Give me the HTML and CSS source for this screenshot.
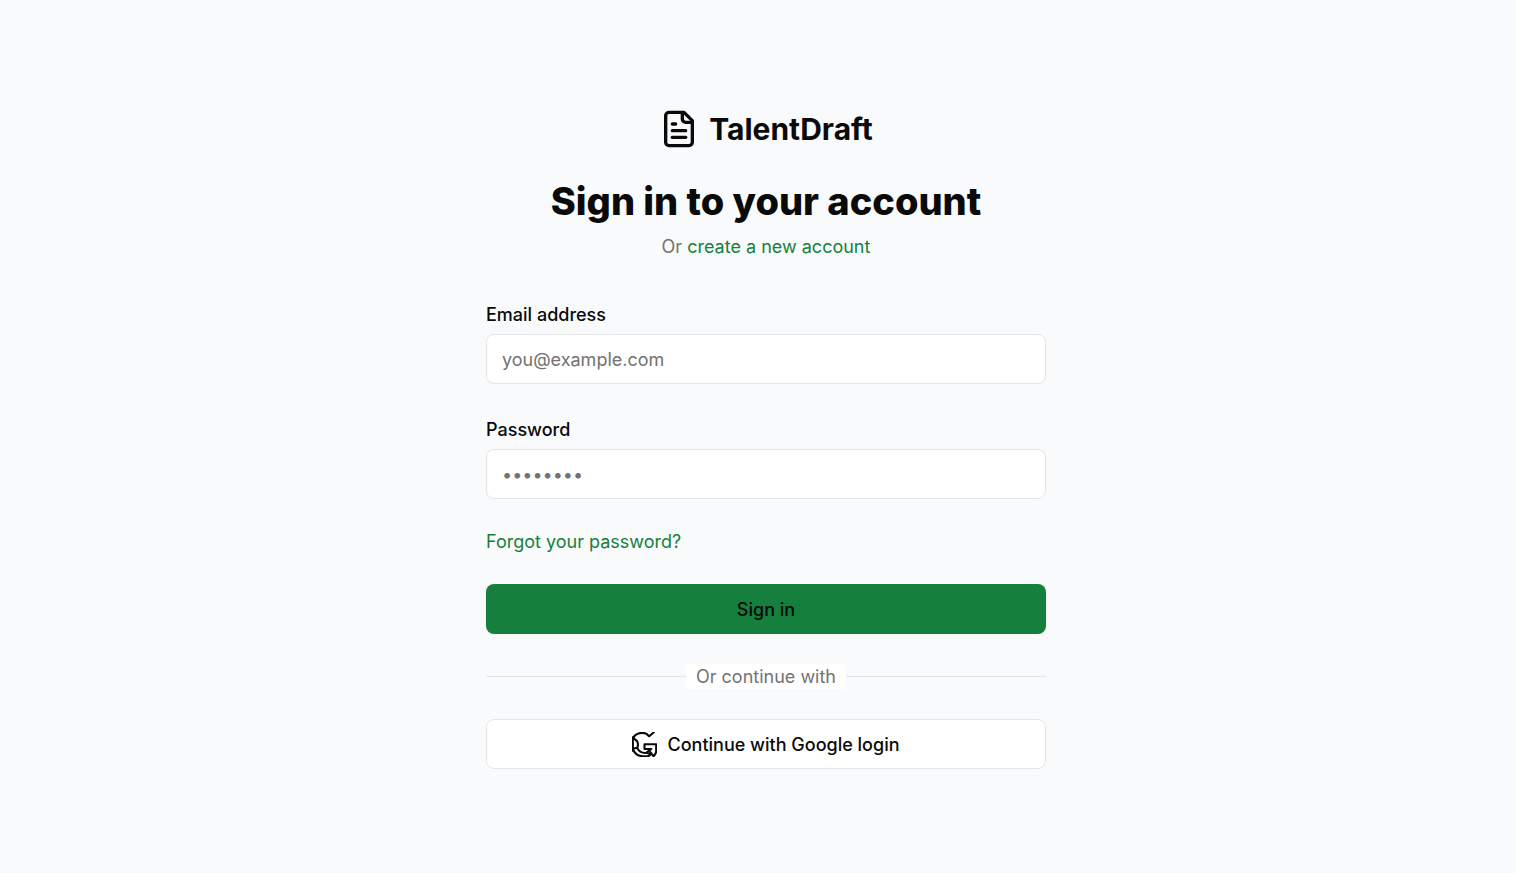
FILE: index.html
```html
<!DOCTYPE html>
<html lang="en">
<head>
  <meta charset="UTF-8" />
  <meta name="viewport" content="width=device-width, initial-scale=1.0" />
  <title>Sign in - TalentDraft</title>
  <link rel="stylesheet" href="styles.css">
</head>
<body>
  <main class="login">
    <header class="login-header">
      <a class="brand" href="#">
        <svg class="brand-icon" viewBox="0 0 24 24" aria-hidden="true">
          <path d="M15 2H6a2 2 0 0 0-2 2v16a2 2 0 0 0 2 2h12a2 2 0 0 0 2-2V7Z" />
          <path d="M14 2v4a2 2 0 0 0 2 2h4" />
          <path d="M10 9H8" />
          <path d="M16 13H8" />
          <path d="M16 17H8" />
        </svg>
        <span>TalentDraft</span>
      </a>
      <h1>Sign in to your account</h1>
      <p>Or <a class="link" href="#">create a new account</a></p>
    </header>

    <form class="login-form">
      <div class="field">
        <label for="email">Email address</label>
        <input type="email" id="email" placeholder="you@example.com" />
      </div>
      <div class="field">
        <label for="password">Password</label>
        <input type="password" id="password" placeholder="••••••••" />
      </div>
      <a class="link forgot" href="#">Forgot your password?</a>
      <button type="submit" class="btn btn-primary">Sign in</button>
    </form>

    <div class="divider"><span>Or continue with</span></div>

    <button type="button" class="btn btn-outline">
      <svg class="google-icon" viewBox="0 0 24 24" aria-hidden="true">
        <path d="M1.200 5.500C3 2 6.500 .8 10.500 .8c2.500 0 4.500 1.400 6 3.300L21 .3" />
        <path d="M.8 5v13M1.800 6L5 9c1 2 1 4.200 0 6.200L1.200 16" />
        <path d="M1 17c2 4 5.500 6.300 9.500 6.300h5M5 15.200C6.500 18.400 9 20 12.500 20.200" />
        <path d="M23.200 11.800H12v4.500h6.500L13.500 20l5 1.200-3 2.200M23.200 11.800v6.500c0 2-1 3.700-2.500 5l-3-4" />
      </svg>
      Continue with Google login
    </button>
  </main>
</body>
</html>
```
FILE: styles.css
```css
* {
  box-sizing: border-box;
}
body {
  margin: 0;
  min-height: 100vh;
  display: flex;
  align-items: center;
  justify-content: center;
  padding: 65px 4px 60px 20px;
  background: #f9fafb;
  color: #0a0a0a;
  font-family: Inter, "Liberation Sans", sans-serif;
  font-size: 18px;
  line-height: 25px;
}
svg {
  fill: none;
  stroke: currentColor;
  stroke-width: 2;
  stroke-linecap: round;
  stroke-linejoin: round;
}
.login {
  width: 100%;
  max-width: 560px;
}
.login-header {
  text-align: center;
}
.brand {
  display: flex;
  align-items: center;
  justify-content: center;
  gap: 10px;
  margin-bottom: 30px;
  color: inherit;
  font-size: 30px;
  font-weight: 700;
  line-height: 40px;
  text-decoration: none;
}
.brand-icon {
  width: 40px;
  height: 40px;
}
h1 {
  margin: 0 0 10px;
  font-size: 38px;
  font-weight: 800;
  line-height: 45px;
}
.login-header p {
  margin: 0;
  color: #737373;
}
.link {
  color: #15803d;
  text-decoration: none;
}
.link:hover {
  text-decoration: underline;
}
.login-form {
  display: flex;
  flex-direction: column;
  gap: 30px;
  margin-top: 40px;
}
.field {
  display: flex;
  flex-direction: column;
  gap: 5px;
}
.field label {
  padding: 3px 0 2px;
  font-weight: 500;
}
.field input {
  width: 100%;
  height: 50px;
  padding: 0 15px;
  background: #fff;
  border: 1px solid #e5e5e5;
  border-radius: 8px;
  color: inherit;
  font: inherit;
}
.field input::placeholder {
  color: #737373;
  opacity: 1;
}
.forgot {
  align-self: flex-start;
}
.btn {
  display: flex;
  align-items: center;
  justify-content: center;
  gap: 10px;
  width: 100%;
  height: 50px;
  border: 1px solid transparent;
  border-radius: 8px;
  color: #0a0a0a;
  font: inherit;
  font-weight: 500;
  cursor: pointer;
}
.btn-primary {
  background: #15803d;
}
.btn-outline {
  background: #fff;
  border-color: #e5e5e5;
}
.divider {
  display: flex;
  align-items: center;
  margin: 30px 0;
  color: #737373;
}
.divider::before,
.divider::after {
  content: "";
  flex: 1;
  border-top: 1px solid #e5e5e5;
}
.divider span {
  padding: 0 10px;
  background: #fff;
}
.google-icon {
  width: 25px;
  height: 25px;
}
```
